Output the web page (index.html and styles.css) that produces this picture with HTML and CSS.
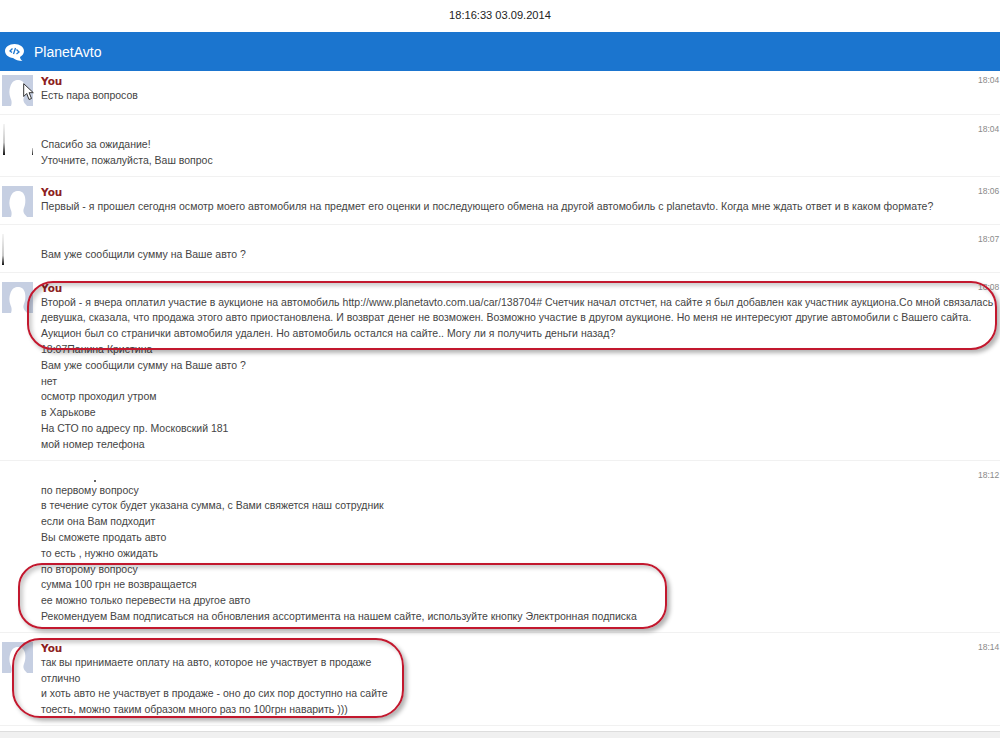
FILE: index.html
```html
<!DOCTYPE html>
<html lang="en">
<head>
    <meta charset="UTF-8">
    <title>PlanetAvto</title>
    <link rel="stylesheet" href="styles.css">
</head>
<body>
    <div class="clock">18:16:33 03.09.2014</div>
    <div class="topbar">
        <svg class="topbar__logo" viewBox="0 0 19 17" width="19" height="17">
            <path d="M9.500 0C4.300 0 0 3 0 7c0 3.700 3.500 6.500 8 6.900 2.500 2 5.500 3 9.500 3.100-1.500-1-2.300-2.500-2.500-4.100C17.500 11.700 19 9.500 19 7c0-4-4.300-7-9.500-7z" fill="#fff"/>
            <path d="M7.500 4.500 5 7l2 1.500M11.500 5.500 14 8l-2.500 2M10.500 4 8.500 10" fill="none" stroke="#1b75cf" stroke-width="1.300"/>
        </svg>
        <span class="topbar__title">PlanetAvto</span>
    </div>
    <div class="chat">
        <div class="msg msg--first">
            <div class="msg__avatar"><svg viewBox="0 0 31 31" width="31" height="31"><rect width="31" height="31" fill="#c6cfe2"/><path d="M9 31c1-3 .8-5-.5-8-1.500-4-1.500-8 0-12C10 6.500 13 5 16 5s6 1.500 7 6c.8 4 .3 8-1.200 11.500-.8 2-.3 4 .6 5.500 1.200 1.500 2.500 2.500 2.600 3z" fill="#fff"/></svg></div>
            <div class="msg__body">
                <div class="msg__author">You</div>
                <div class="msg__text">Есть пара вопросов</div>
            </div>
            <div class="msg__time">18:04</div>
            <svg class="cursor" viewBox="0 0 11 18" width="11" height="18">
                <path d="M.700.700V13.500l3-3 2.300 6 2.500-1-2.400-5.800h4.200z" fill="#fff" stroke="#333" stroke-width="1"/>
            </svg>
        </div>
        <div class="msg">
            <div class="msg__avatar msg__avatar--ticks"></div>
            <div class="msg__body">
                <div class="msg__author"></div>
                <div class="msg__text">Спасибо за ожидание!</div>
                <div class="msg__text">Уточните, пожалуйста, Ваш вопрос</div>
            </div>
            <div class="msg__time">18:04</div>
        </div>
        <div class="msg">
            <div class="msg__avatar"><svg viewBox="0 0 31 31" width="31" height="31"><rect width="31" height="31" fill="#c6cfe2"/><path d="M9 31c1-3 .8-5-.5-8-1.500-4-1.500-8 0-12C10 6.500 13 5 16 5s6 1.500 7 6c.8 4 .3 8-1.200 11.500-.8 2-.3 4 .6 5.500 1.200 1.500 2.500 2.500 2.600 3z" fill="#fff"/></svg></div>
            <div class="msg__body">
                <div class="msg__author">You</div>
                <div class="msg__text msg__text--wide">Первый - я прошел сегодня осмотр моего автомобиля на предмет его оценки и последующего обмена на другой автомобиль с planetavto. Когда мне ждать ответ и в каком формате?</div>
            </div>
            <div class="msg__time">18:06</div>
        </div>
        <div class="msg">
            <div class="msg__avatar msg__avatar--tick"></div>
            <div class="msg__body">
                <div class="msg__author"></div>
                <div class="msg__text">Вам уже сообщили сумму на Ваше авто ?</div>
            </div>
            <div class="msg__time">18:07</div>
        </div>
        <div class="msg">
            <div class="msg__avatar"><svg viewBox="0 0 31 31" width="31" height="31"><rect width="31" height="31" fill="#c6cfe2"/><path d="M9 31c1-3 .8-5-.5-8-1.500-4-1.500-8 0-12C10 6.500 13 5 16 5s6 1.500 7 6c.8 4 .3 8-1.200 11.500-.8 2-.3 4 .6 5.500 1.200 1.500 2.500 2.500 2.600 3z" fill="#fff"/></svg></div>
            <div class="msg__body">
                <div class="msg__author">You</div>
                <div class="msg__text msg__text--wide">Второй - я вчера оплатил участие в аукционе на автомобиль http://www.planetavto.com.ua/car/138704# Счетчик начал отстчет, на сайте я был добавлен как участник аукциона.Со мной связалась девушка, сказала, что продажа этого авто приостановлена. И возврат денег не возможен. Возможно участие в другом аукционе. Но меня не интересуют другие автомобили с Вашего сайта. Аукцион был со странички автомобиля удален. Но автомобиль остался на сайте.. Могу ли я получить деньги назад?</div>
                <div class="msg__text">18:07Панина Кристина</div>
                <div class="msg__text">Вам уже сообщили сумму на Ваше авто ?</div>
                <div class="msg__text">нет</div>
                <div class="msg__text">осмотр проходил утром</div>
                <div class="msg__text">в Харькове</div>
                <div class="msg__text">На СТО по адресу пр. Московский 181</div>
                <div class="msg__text">мой номер телефона</div>
            </div>
            <div class="msg__time">18:08</div>
        </div>
        <div class="msg">
            <div class="msg__avatar"></div>
            <div class="msg__body">
                <div class="msg__author msg__author--speck"><div class="msg__speck"></div></div>
                <div class="msg__text">по первому вопросу</div>
                <div class="msg__text">в течение суток будет указана сумма, с Вами свяжется наш сотрудник</div>
                <div class="msg__text">если она Вам подходит</div>
                <div class="msg__text">Вы сможете продать авто</div>
                <div class="msg__text">то есть , нужно ожидать</div>
                <div class="msg__text">по второму вопросу</div>
                <div class="msg__text">сумма 100 грн не возвращается</div>
                <div class="msg__text">ее можно только перевести на другое авто</div>
                <div class="msg__text">Рекомендуем Вам подписаться на обновления ассортимента на нашем сайте, используйте кнопку Электронная подписка</div>
            </div>
            <div class="msg__time">18:12</div>
        </div>
        <div class="msg">
            <div class="msg__avatar"><svg viewBox="0 0 31 31" width="31" height="31"><rect width="31" height="31" fill="#c6cfe2"/><path d="M9 31c1-3 .8-5-.5-8-1.500-4-1.500-8 0-12C10 6.500 13 5 16 5s6 1.500 7 6c.8 4 .3 8-1.200 11.500-.8 2-.3 4 .6 5.500 1.200 1.500 2.500 2.500 2.600 3z" fill="#fff"/></svg></div>
            <div class="msg__body">
                <div class="msg__author">You</div>
                <div class="msg__text">так вы принимаете оплату на авто, которое не участвует в продаже</div>
                <div class="msg__text">отлично</div>
                <div class="msg__text">и хоть авто не участвует в продаже - оно до сих пор доступно на сайте</div>
                <div class="msg__text">тоесть, можно таким образом много раз по 100грн наварить )))</div>
            </div>
            <div class="msg__time">18:14</div>
        </div>
    </div>
    <div class="bottombar"></div>

    <!-- red hand-drawn marks over the screenshot -->
    <div class="oval oval--one"></div>
    <div class="oval oval--two"></div>
    <div class="oval oval--three"></div>
</body>
</html>
```

FILE: styles.css
```css
html, body {
    margin: 0;
    padding: 0;
}

body {
    position: relative;
    height: 738px;
    overflow: hidden;
    background: #fff;
    font-family: "Liberation Sans", Arial, sans-serif;
    color: #444;
}

.clock {
    height: 32px;
    line-height: 30px;
    text-align: center;
    font-size: 11.1px;
    color: #222;
}

.topbar {
    height: 39px;
    background: #1b75cf;
    display: flex;
    align-items: center;
    padding-left: 5px;
    gap: 10px;
}

.topbar__logo {
    flex: none;
    margin-top: 1px;
}

.topbar__title {
    color: #fff;
    font-size: 14px;
}

.msg {
    position: relative;
    display: flex;
    padding: 8px 0 7px 2px;
    border-bottom: 1px solid #f1f1f1;
}

.msg--first {
    padding: 3px 0 8px 2px;
}

.msg__avatar {
    flex: none;
    width: 31px;
    height: 31px;
    margin: 1px 8px 0 0;
}

/* leftovers of the photo at the bottom of the empty avatars */
.msg__avatar--ticks {
    background:
        linear-gradient(to bottom, #f4f4f4, #c8c8c8 60%, #111) no-repeat 1px 0 / 2px 100%,
        linear-gradient(to bottom, #ccc, #222) no-repeat 30px 24px / 1px 7px;
}

.msg__avatar--tick {
    background: linear-gradient(to bottom, #f4f4f4, #c8c8c8 70%, #111) no-repeat 0 0 / 2px 100%;
}

.msg__body {
    flex: 1;
    min-width: 0;
}

.msg__author {
    height: 14px;
    line-height: 14px;
    font-family: "DejaVu Sans", sans-serif;
    font-size: 10.5px;
    font-weight: bold;
    color: #8c2020;
}

.msg__author--speck {
    box-sizing: border-box;
    padding: 11px 0 0 53px;
}

.msg__speck {
    width: 2px;
    height: 2px;
    background: #666;
}

.msg__text {
    font-size: 10.5px;
    line-height: 15.8px;
    color: #444;
}

.msg__text--wide {
    letter-spacing: 0.027px;
}

.msg__time {
    flex: none;
    width: 22px;
    margin-left: -22px;
    margin-top: 1px;
    font-size: 8.5px;
    color: #8a8a8a;
}

.cursor {
    position: absolute;
    left: 23px;
    top: 12px;
}

.bottombar {
    height: 10px;
    margin-top: 5px;
    background: #f0f0f0;
    border-top: 1px solid #ddd;
}

.oval {
    position: absolute;
    box-sizing: border-box;
    border: 2px solid #c2182e;
    box-shadow: 3px 3px 4px rgba(0, 0, 0, 0.3), inset 3px 3px 4px rgba(0, 0, 0, 0.2);
}

.oval--one {
    left: 27px;
    top: 281px;
    width: 970px;
    height: 69px;
    border-radius: 26px;
}

.oval--two {
    left: 18px;
    top: 563px;
    width: 649px;
    height: 66px;
    border-radius: 24px;
}

.oval--three {
    left: 12px;
    top: 638px;
    width: 392px;
    height: 80px;
    border-radius: 28px;
}
```
